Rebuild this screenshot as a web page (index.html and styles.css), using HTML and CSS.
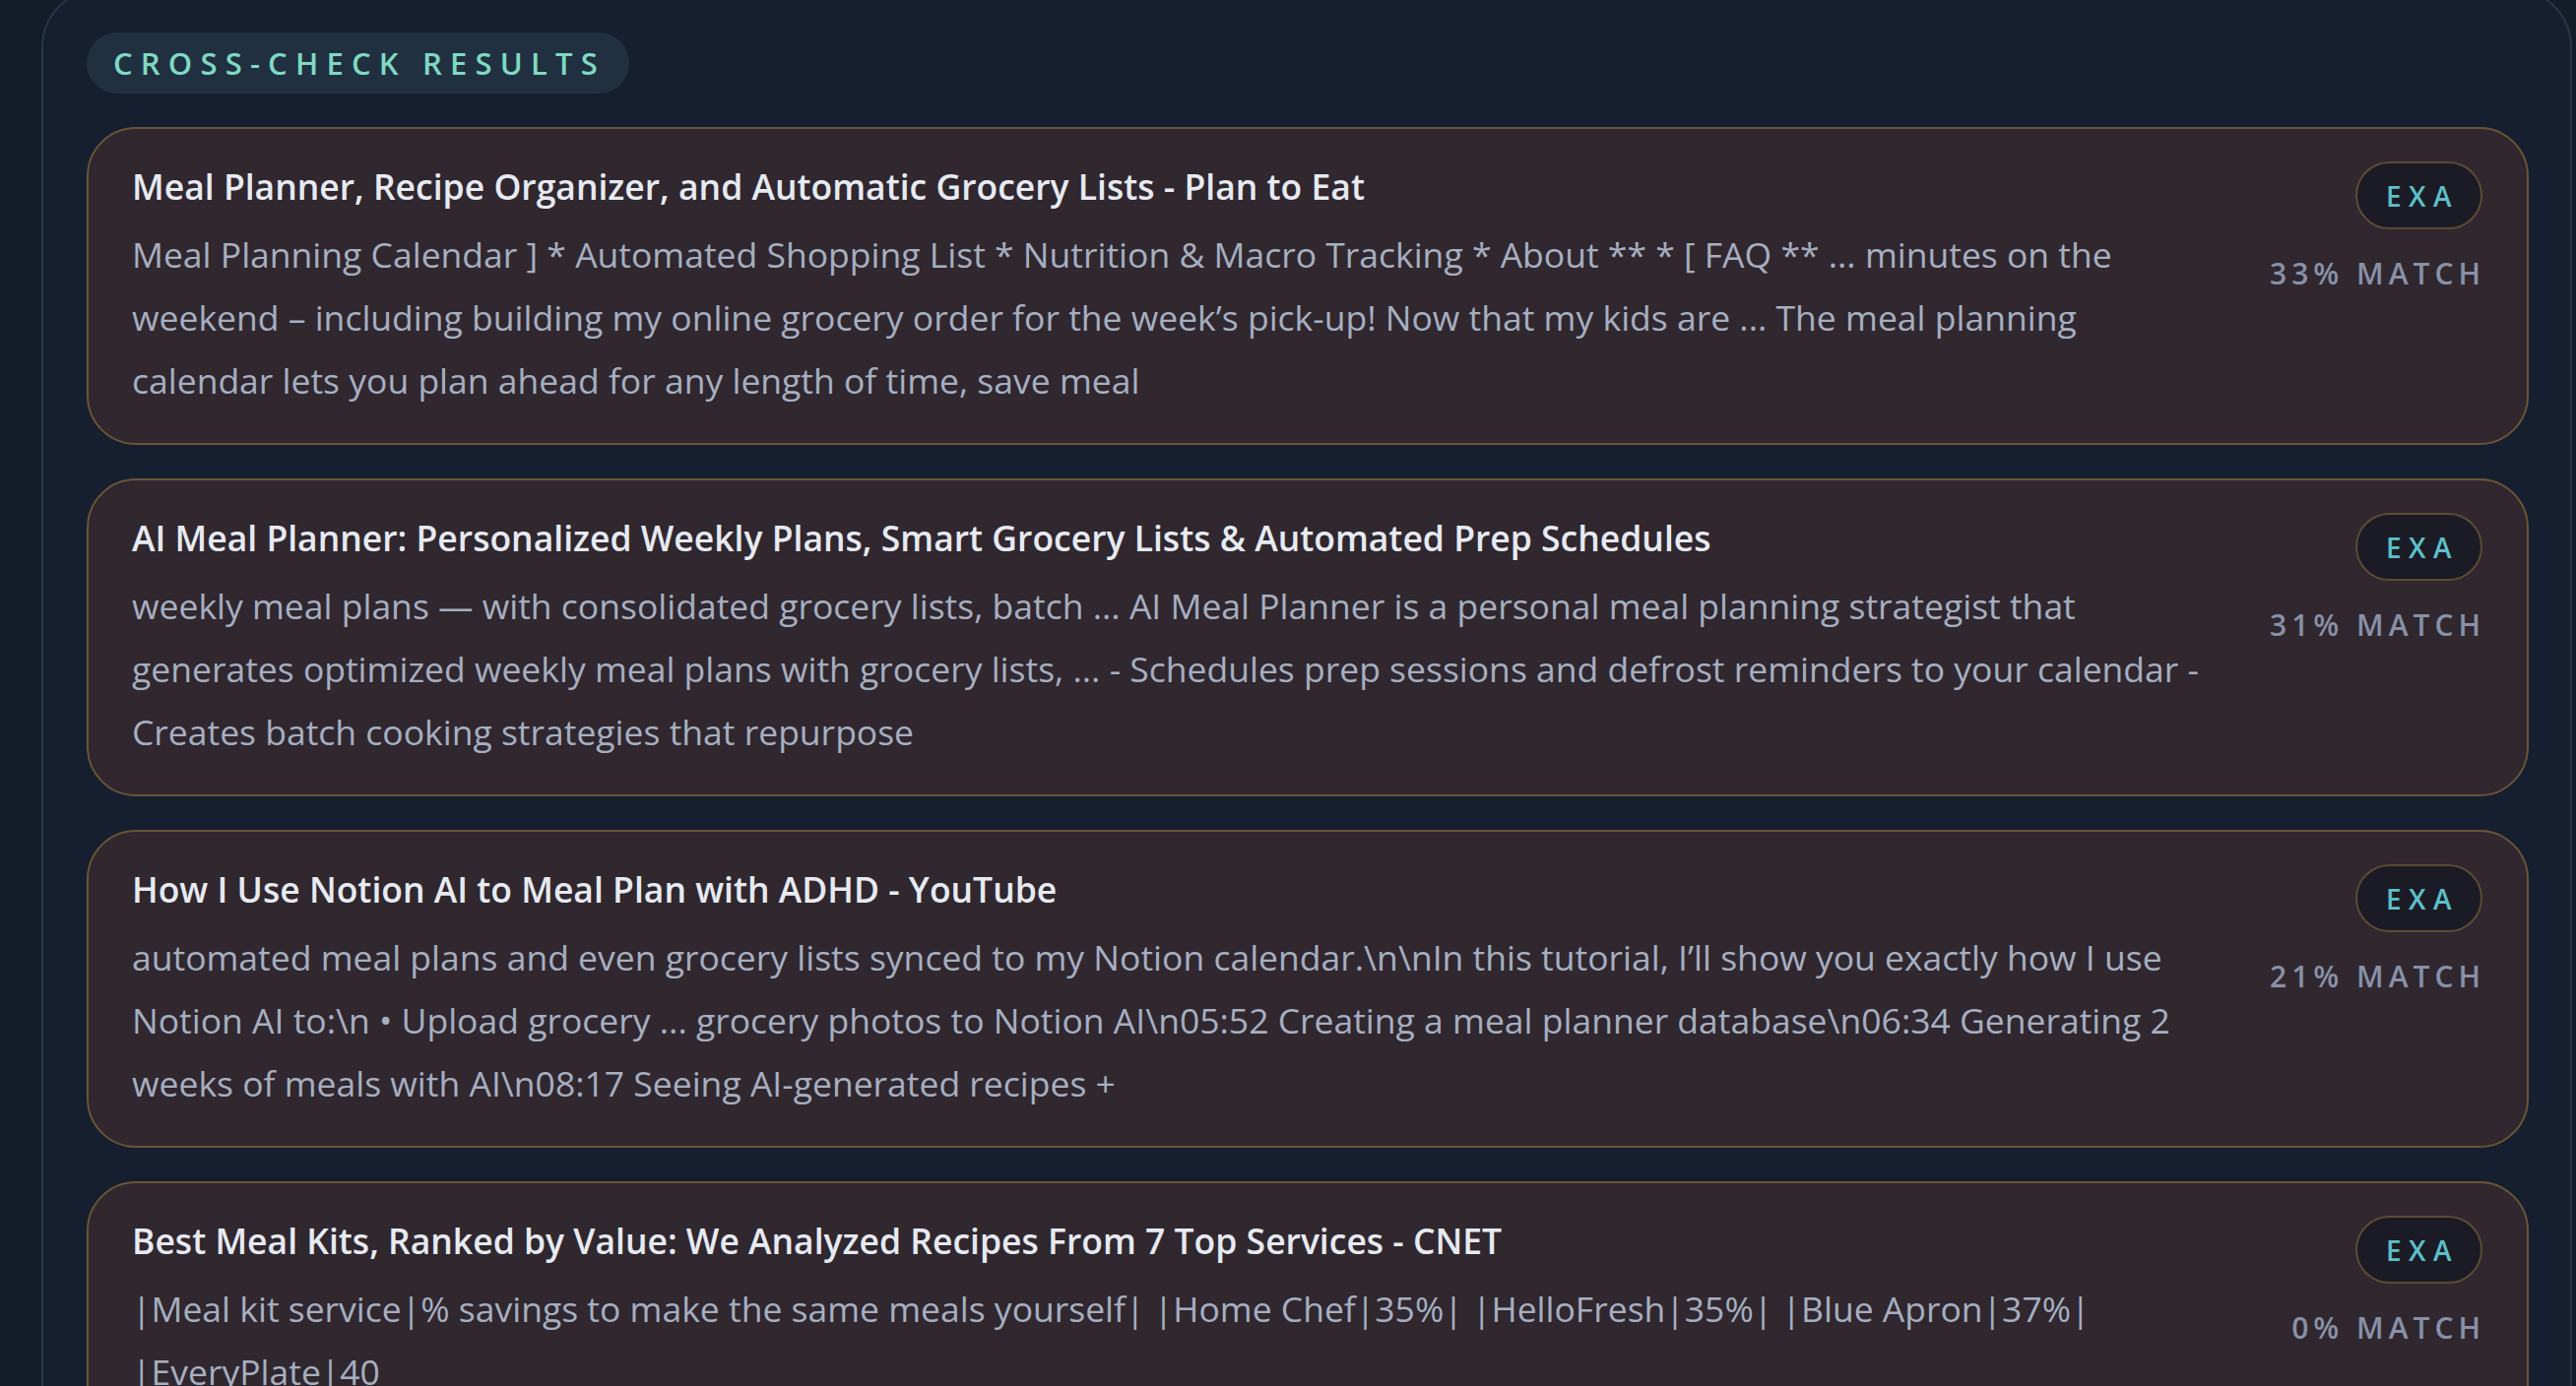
FILE: index.html
```html
<!DOCTYPE html>
<html lang="en">
<head>
<meta charset="utf-8">
<title>Cross-check results</title>
<link rel="stylesheet" href="styles.css">
</head>
<body>
<section class="panel">
  <div class="section-tag">CROSS-CHECK RESULTS</div>
  <div class="results">
    <article class="result">
      <div class="result-main">
        <h3 class="result-title">Meal Planner, Recipe Organizer, and Automatic Grocery Lists - Plan to Eat</h3>
        <p class="result-snippet">Meal Planning Calendar ] * Automated Shopping List * Nutrition &amp; Macro Tracking * About ** * [ FAQ ** ... minutes on the weekend – including building my online grocery order for the week’s pick-up! Now that my kids are ... The meal planning calendar lets you plan ahead for any length of time, save meal</p>
      </div>
      <div class="result-meta">
        <span class="source-pill">EXA</span>
        <span class="match">33% MATCH</span>
      </div>
    </article>
    <article class="result">
      <div class="result-main">
        <h3 class="result-title">AI Meal Planner: Personalized Weekly Plans, Smart Grocery Lists &amp; Automated Prep Schedules</h3>
        <p class="result-snippet">weekly meal plans — with consolidated grocery lists, batch ... AI Meal Planner is a personal meal planning strategist that generates optimized weekly meal plans with grocery lists, ... - Schedules prep sessions and defrost reminders to your calendar - Creates batch cooking strategies that repurpose</p>
      </div>
      <div class="result-meta">
        <span class="source-pill">EXA</span>
        <span class="match">31% MATCH</span>
      </div>
    </article>
    <article class="result">
      <div class="result-main">
        <h3 class="result-title">How I Use Notion AI to Meal Plan with ADHD - YouTube</h3>
        <p class="result-snippet">automated meal plans and even grocery lists synced to my Notion calendar.\n\nIn this tutorial, I’ll show you exactly how I use Notion AI to:\n • Upload grocery ... grocery photos to Notion AI\n05:52 Creating a meal planner database\n06:34 Generating 2 weeks of meals with AI\n08:17 Seeing AI-generated recipes +</p>
      </div>
      <div class="result-meta">
        <span class="source-pill">EXA</span>
        <span class="match">21% MATCH</span>
      </div>
    </article>
    <article class="result">
      <div class="result-main">
        <h3 class="result-title">Best Meal Kits, Ranked by Value: We Analyzed Recipes From 7 Top Services - CNET</h3>
        <p class="result-snippet">|Meal kit service|% savings to make the same meals yourself| |Home Chef|35%| |HelloFresh|35%| |Blue Apron|37%| |EveryPlate|40</p>
      </div>
      <div class="result-meta">
        <span class="source-pill">EXA</span>
        <span class="match">0% MATCH</span>
      </div>
    </article>
  </div>
</section>
</body>
</html>
```
FILE: styles.css
```css
html, body {
  margin: 0;
  padding: 0;
}

body {
  background: #141c2a;
  font-family: "Open Sans", "Noto Sans", sans-serif;
  overflow: hidden;
}

.panel {
  margin: -12px 4px 0 42px;
  border: 2px solid #27344a;
  border-radius: 60px;
  background: #161f2f;
  padding: 43px 42px 80px 44px;
}

.section-tag {
  display: inline-flex;
  align-items: center;
  height: 62px;
  box-sizing: border-box;
  padding: 0 24px 0 27px;
  border-radius: 31px;
  background: #213040;
  color: #7fd9c2;
  font-size: 31px;
  font-weight: 600;
  letter-spacing: 8.2px;
}

.results {
  display: flex;
  flex-direction: column;
  gap: 34px;
  margin-top: 34px;
}

.result {
  display: flex;
  gap: 56px;
  align-items: flex-start;
  background: #30272f;
  border: 2px solid #6a5536;
  border-radius: 50px;
  padding: 33px 45px 32px 44px;
}

.result-main {
  flex: 1;
  min-width: 0;
}

.result-title {
  margin: 1px 0 13px;
  font-size: 35.5px;
  line-height: 48px;
  font-weight: 600;
  color: #e6eaf1;
}

.result-snippet {
  margin: 0;
  font-size: 35.5px;
  line-height: 64px;
  font-weight: 400;
  color: #a6afc0;
}

.result-meta {
  display: flex;
  flex-direction: column;
  align-items: flex-end;
  flex-shrink: 0;
}

.source-pill {
  display: flex;
  align-items: center;
  justify-content: center;
  width: 129px;
  height: 69px;
  box-sizing: border-box;
  padding-left: 7px;
  border: 2px solid #5c4b33;
  border-radius: 35px;
  background: #1b1b25;
  color: #5cc0ca;
  font-size: 28px;
  font-weight: 600;
  letter-spacing: 7.5px;
}

.match {
  margin-top: 25px;
  margin-right: -3px;
  font-size: 30px;
  line-height: 40px;
  font-weight: 600;
  letter-spacing: 5px;
  color: #8891a7;
  white-space: nowrap;
}
```
